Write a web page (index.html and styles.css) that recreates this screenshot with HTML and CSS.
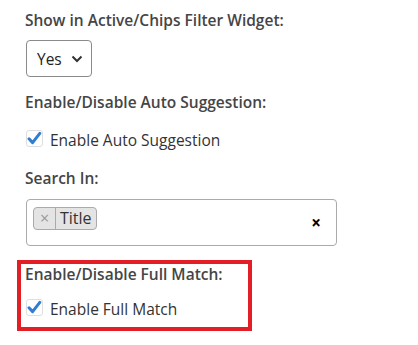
FILE: index.html
```html
<!DOCTYPE html>
<html>
<head>
<meta charset="utf-8">
<link rel="stylesheet" href="styles.css">
</head>
<body>
<div class="form">
  <div class="field f1">
    <div class="label">Show in Active/Chips Filter Widget:</div>
    <div class="select">Yes
      <svg class="chev" width="12" height="8" viewBox="0 0 12 8"><path d="M1.5 1.5 L6 6 L10.5 1.5" fill="none" stroke="#333" stroke-width="2"/></svg>
    </div>
  </div>
  <div class="field f2">
    <div class="label">Enable/Disable Auto Suggestion:</div>
    <label class="check">
      <span class="box"><svg width="15" height="15" viewBox="0 0 15 15"><path d="M2 7.8 L5.6 11.6 L12.8 2.4" fill="none" stroke="#2f7ed0" stroke-width="3" stroke-linecap="round" stroke-linejoin="round"/></svg></span>
      Enable Auto Suggestion
    </label>
  </div>
  <div class="field f3">
    <div class="label">Search In:</div>
    <div class="multi">
      <span class="chip"><span class="chip-x">×</span><span class="chip-t">Title</span></span>
      <span class="clear">×</span>
    </div>
  </div>
  <div class="field highlight">
    <div class="label">Enable/Disable Full Match:</div>
    <label class="check">
      <span class="box"><svg width="15" height="15" viewBox="0 0 15 15"><path d="M2 7.8 L5.6 11.6 L12.8 2.4" fill="none" stroke="#2f7ed0" stroke-width="3" stroke-linecap="round" stroke-linejoin="round"/></svg></span>
      Enable Full Match
    </label>
  </div>
</div>
</body>
</html>
```

FILE: styles.css
```css
html, body {
  margin: 0;
  padding: 0;
  background: #fff;
}
body {
  font-family: "Open Sans", "Noto Sans", sans-serif;
  font-size: 15.5px;
  color: #333;
}
.form {
  padding: 10px 0 0 25px;
}
.label {
  font-weight: 600;
  color: #454545;
  font-size: 15.5px;
  line-height: 20px;
}
.f2 {
  margin-top: 15px;
}
.f3 {
  margin-top: 18px;
}
.select {
  margin-top: 10px;
  margin-left: 1px;
  width: 66px;
  height: 37px;
  box-sizing: border-box;
  border: 1px solid #8a8a8a;
  border-radius: 4px;
  display: flex;
  align-items: center;
  padding-left: 10px;
  gap: 9px;
  font-size: 15.5px;
  color: #222;
}
.check {
  display: flex;
  align-items: center;
  gap: 7px;
  margin-top: 18px;
  margin-left: 1px;
  font-size: 15.5px;
  color: #333;
  line-height: 20px;
}
.box {
  width: 17px;
  height: 17px;
  box-sizing: border-box;
  border: 1px solid #dedede;
  border-radius: 3px;
  display: flex;
  align-items: center;
  justify-content: center;
  background: #fff;
  margin-top: -3px;
}
.multi {
  margin-top: 11px;
  margin-left: 1px;
  width: 311px;
  height: 47px;
  box-sizing: border-box;
  border: 1px solid #aaa;
  border-radius: 4px;
  padding: 7px 0 0 6px;
  position: relative;
  display: flex;
  align-items: flex-start;
}
.chip {
  display: inline-flex;
  height: 23px;
  box-sizing: border-box;
  border: 1px solid #aaa;
  border-radius: 4px;
  background: #e4e4e4;
  font-size: 16px;
  line-height: 21px;
}
.chip-x {
  color: #999;
  width: 21px;
  text-align: center;
  font-weight: 400;
  border-right: 1px solid #aaa;
  font-size: 16px;
}
.chip-t {
  padding: 0 4px 0 4px;
  color: #333;
}
.clear {
  position: absolute;
  right: 15px;
  top: 11px;
  font-weight: 700;
  font-size: 17px;
  color: #000;
}
.highlight {
  margin-top: 14px;
  width: 235px;
  height: 71px;
  box-sizing: border-box;
  border: 4px solid #e41e25;
  margin-left: -8px;
  padding: 0 0 0 4px;
}
.highlight .label {
  margin-top: 0;
}
.highlight .check {
  margin-top: 15px;
}
```
